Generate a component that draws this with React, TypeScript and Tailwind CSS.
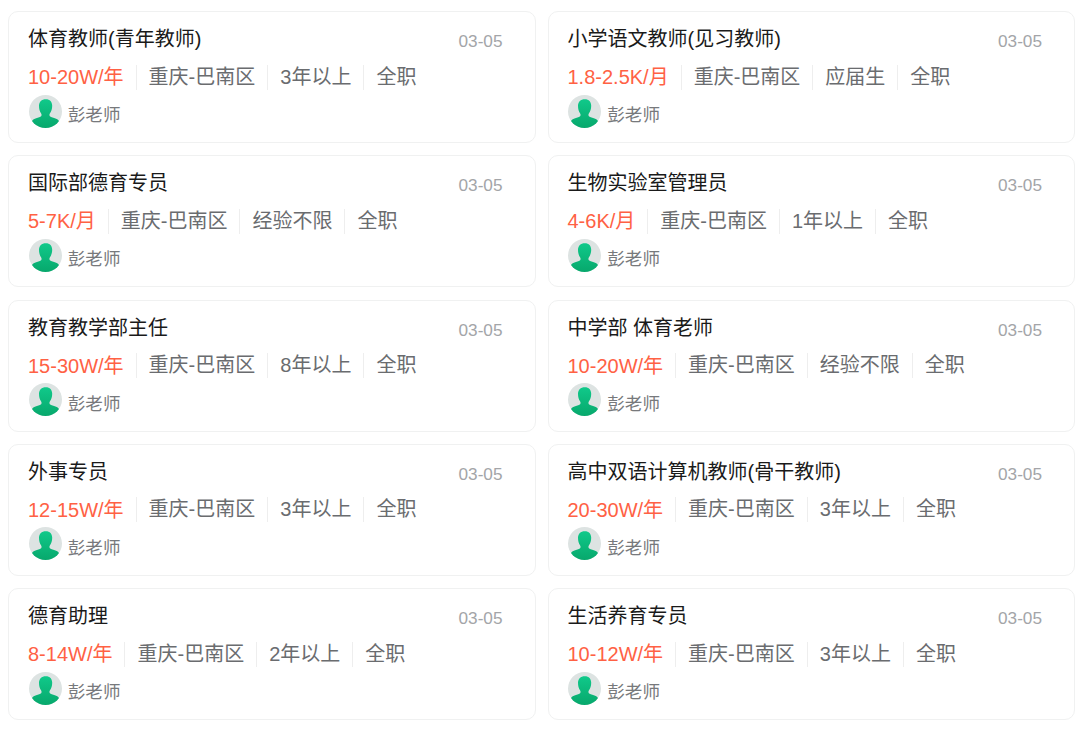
import React from 'react';

type Job = { title: string; salary: string; tags: string[] };

const JOBS: Job[] = [
  { title: '体育教师(青年教师)', salary: '10-20W/年', tags: ['重庆-巴南区', '3年以上', '全职'] },
  { title: '小学语文教师(见习教师)', salary: '1.8-2.5K/月', tags: ['重庆-巴南区', '应届生', '全职'] },
  { title: '国际部德育专员', salary: '5-7K/月', tags: ['重庆-巴南区', '经验不限', '全职'] },
  { title: '生物实验室管理员', salary: '4-6K/月', tags: ['重庆-巴南区', '1年以上', '全职'] },
  { title: '教育教学部主任', salary: '15-30W/年', tags: ['重庆-巴南区', '8年以上', '全职'] },
  { title: '中学部 体育老师', salary: '10-20W/年', tags: ['重庆-巴南区', '经验不限', '全职'] },
  { title: '外事专员', salary: '12-15W/年', tags: ['重庆-巴南区', '3年以上', '全职'] },
  { title: '高中双语计算机教师(骨干教师)', salary: '20-30W/年', tags: ['重庆-巴南区', '3年以上', '全职'] },
  { title: '德育助理', salary: '8-14W/年', tags: ['重庆-巴南区', '2年以上', '全职'] },
  { title: '生活养育专员', salary: '10-12W/年', tags: ['重庆-巴南区', '3年以上', '全职'] },
];

const Avatar: React.FC = () => (
  <svg width="33" height="33" viewBox="0 0 33 33" className="ml-[0.75px] shrink-0">
    <defs>
      <clipPath id="avatar-clip">
        <circle cx="16.5" cy="16.5" r="16.5" />
      </clipPath>
      <linearGradient id="avatar-green" x1="0" y1="0" x2="0" y2="1">
        <stop offset="0" stopColor="#10c98a" />
        <stop offset="1" stopColor="#07a86c" />
      </linearGradient>
    </defs>
    <g clipPath="url(#avatar-clip)">
      <rect width="33" height="33" fill="#dde3e2" />
      <path
        d="M16.800 4.200c-4.200 0-6.800 2.600-6.800 6.600 0 3 .7 5.600 2 7.400.5.700.7 1.500.5 2.300-.3 1-1.500 1.600-3.800 2.200-3.200.8-5.400 1.900-6.200 4.300L1.500 33h30l-1-6c-.8-2.400-3-3.500-6.200-4.300-2.300-.6-3.500-1.200-3.800-2.200-.2-.8 0-1.600.5-2.300 1.300-1.800 2.200-4.400 2.200-7.400 0-4-2.200-6.600-6.400-6.600z"
        fill="url(#avatar-green)"
      />
    </g>
  </svg>
);

const JobCard: React.FC<{ job: Job }> = ({ job }) => (
  <div className="h-[132px] rounded-[10px] border border-[#f0f1f1] bg-white pl-[19px] pr-[32px] pt-[10px]">
    <div className="flex items-start justify-between">
      <h3 className="text-[20px] font-normal leading-[34px] text-[#1a1a1a]">{job.title}</h3>
      <span className="mt-[4px] text-[17.2px] leading-[30px] text-[#a3a5a8]">03-05</span>
    </div>
    <div className="mt-[4px] flex h-[34px] items-center text-[20px] text-[#6a6c6f]">
      <span className="text-[#ff6144]">{job.salary}</span>
      {job.tags.map((tag) => (
        <span key={tag} className="ml-[12px] border-l border-[#eeeeee] pl-[12px] leading-[25px]">
          {tag}
        </span>
      ))}
    </div>
    <div className="flex items-center">
      <Avatar />
      <span className="ml-[6px] mt-[8px] text-[17.6px] text-[#77797c]">彭老师</span>
    </div>
  </div>
);

const App: React.FC = () => (
  <div
    className="h-[730px] w-[1080px] overflow-hidden bg-white pl-2 pt-[11px]"
    style={{ fontFamily: '"Liberation Sans", "Noto Sans CJK SC", sans-serif' }}
  >
    <div className="grid w-[1067px] grid-cols-[527.5px_527.5px] gap-x-[12px] gap-y-[12.25px]">
      {JOBS.map((job) => (
        <JobCard key={job.title} job={job} />
      ))}
    </div>
  </div>
);

export default App;
